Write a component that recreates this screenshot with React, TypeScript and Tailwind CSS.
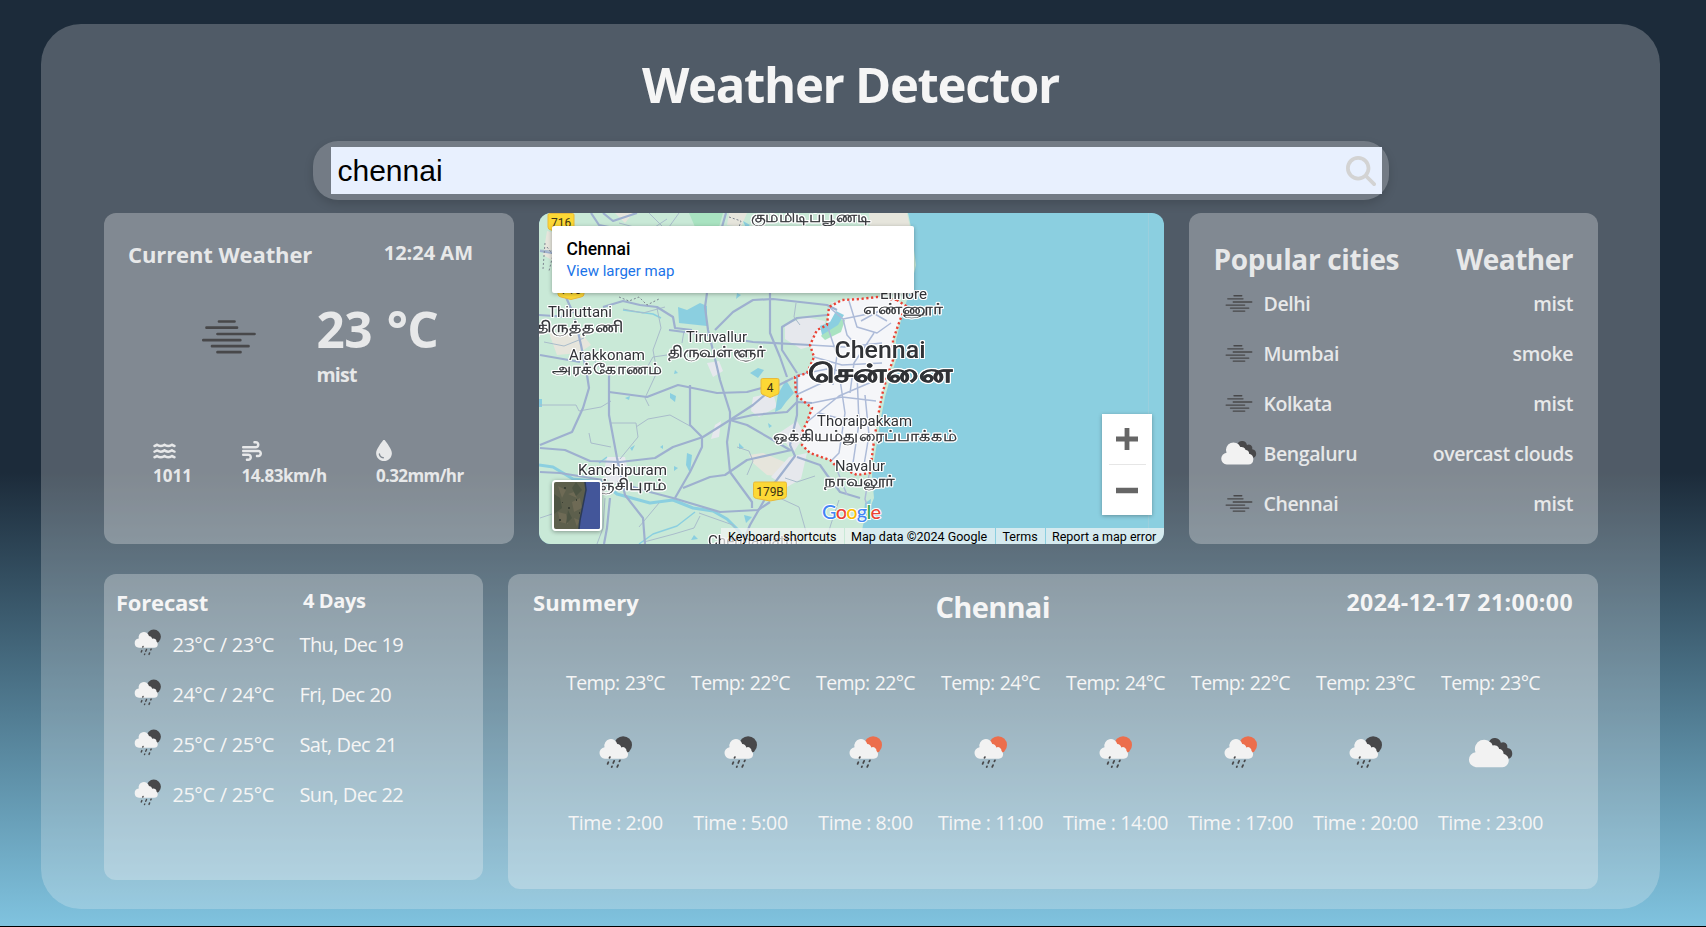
import type { ReactNode } from "react";
import { FaDroplet, FaMagnifyingGlass, FaWater, FaWind } from "react-icons/fa6";

type IconKind = "mist" | "clouds" | "rainNight" | "rainDay";

function WeatherIcon({ kind, className }: { kind: IconKind; className: string }) {
  return (
    <svg viewBox="0 0 100 100" className={className} aria-hidden="true">
      {kind === "mist" && (
        <g stroke="#48484a" strokeWidth="2.7" strokeLinecap="round">
          <path d="M40 33.5h15.500M27.500 39.700h30.500M38.500 46h37M24.300 52.200h37M33 58.200h36.500M38.500 64.200h23" />
        </g>
      )}
      {kind === "clouds" && (
        <g transform="translate(-3 -2.500) scale(1.060)">
          <path
            d="M47 31a9.500 9.500 0 0 1 18 1.500a7 7 0 0 1 10 8a8.500 8.500 0 0 1 1.500 16.500H68L47 40z"
            fill="#48484a"
          />
          <path
            d="M27 69.500a11.300 11.300 0 0 1-.500-22.500a14 14 0 0 1 26-10.500a8 8 0 0 1 10 5.500a6.500 6.500 0 0 1 6.500 7a10.400 10.400 0 0 1-1.500 20.500z"
            fill="#f2f2f2"
          />
        </g>
      )}
      {(kind === "rainNight" || kind === "rainDay") && (
        <g transform="translate(-1 0)">
          <circle cx="62.500" cy="35.500" r="14.300" fill={kind === "rainDay" ? "#ec6e4c" : "#48484a"} />
          <path
            d="M33 57.500a9.300 9.300 0 0 1-.500-18.500a10.300 10.300 0 0 1 20.500-5a7 7 0 0 1 6.500 5.500a5.800 5.800 0 0 1 8.500 5.500a6.400 6.400 0 0 1 2.500 6a7 7 0 0 1-7 6.500z"
            fill="#f2f2f2"
          />
          <g stroke="#48484a" strokeWidth="2.800" strokeLinecap="round">
            <path d="M40.500 56.200l.600-1.200M37.500 66l1.200-2.800M46.500 64.500l1.500-3.500M56.500 61.800l.800-1.600M44 71l.500-1M53 70.800l1.300-3" />
          </g>
        </g>
      )}
    </svg>
  );
}

const MINOR_ROADS =
  "M1 192h36l3 6 22-4 10-6M72 210h25l2 14-18 22M50 220l2 10 20 4M97 214l12-8 22-4 20 11M1 37l12 1 8 12 10 10M80 10l30 8 18-12M110 0l14 14M140 0l-10 14M118 95l4 20-8 22 4 22-12 26 4 8M84 96l20 4 22-6M257 90l-2 14 6 8M5 129l20 4 20-8M106 158l8-14 14-2M208 262l6-14-4-10-12-4M234 282l26 12 8 28-6 9M161 303l-6 12-20 6-30 8M120 290l-20 24M160 300l34 12 14 19M300 287l-8 24-6 20M50 140l10 14 10 8M145 118l-2 12M246 265l12 4 18-6M1 305l12-4 10 10M66 285l-2 30-6 16";

const ROADS = [
  "M1 38l12 2M64 0l10 8 24-8M52 0l8 12 20 4M187 0l-4 14",
  "M0 102l30 2M64 94l20-6 17 4 17 2 16 10 2 11 17 2M130 117l46 6 38 6 57 3",
  "M176 117l18-18 20-12 20-1 54 6 10 5",
  "M168 80l-2 14 3 23 9 37 3 13 10 32v10l-3 20 3 30 22 30v6",
  "M231 80v40l10 24 7 20M288 102l-30 3-15 9v23l15 23",
  "M1 232l32-13 11-24 6-20-2-13-6-30-6-26M1 142l40 7M26 82l8 18",
  "M70 155v47l8 43 8 37 18 23 2 26M71 285l-3 30-3 16",
  "M1 235l25 2 25 11 30 1 35-4 18-11 30-10 27-17 23-15 20-17 20-10",
  "M70 179l38 5 31-12 39 8 30-1 26-7",
  "M151 172v40l12 12v10l-12 25-15 26M144 275l27-11 15-2 22-15 40-9 5-1",
  "M191 207l17 5 26 15 17 10M191 207l23-5 34-3 10-10 15 1",
  "M258 162v40l-7 30 5 11-22 29-23 40-8 19",
  "M78 269l33 10 23 6 47 14 38-2 12-8",
  "M258 244l23 8 7 10 13 17 20 6M1 259l20 1 43 7",
];

const CITY_ROADS =
  "M290 94l14 12 4 16 18 20M304 106l30-6 14 8M271 132l34 2 38-4M275 144l28 8 40-2M288 112l10 30-4 30M258 162l30-6 56 8M268 209l32-26 42-18M273 190l30-6 34 4M257 182l30-14M280 200l30 8 26 2M300 160l6 40-6 40-8 8M318 160l2 50-6 40M335 120l-20 30-4 30M326 182l4 40-6 36M296 252l12 30M330 262l-4 24 4 12M310 88l8 26 20 6 14-10M340 98l-18 10";

const BOUNDARY =
  "M358 87L338 84 321 86 303 87 290 94 288 112 278 117 271 132 275 144 268 160 256 164 257 182 273 195 268 209 263 219 263 232 271 240 291 247 296 252 318 262 331 260 334 235 338 209 343 182 348 164 354 147 354 127 361 107 367 93z";

function MapLabel({
  x,
  y,
  w,
  size,
  weight = 400,
  stroke = 0,
  children,
}: {
  x: number;
  y: number;
  w: number;
  size: number;
  weight?: number;
  stroke?: number;
  children: string;
}) {
  return (
    <text
      x={x}
      y={y}
      textLength={w}
      lengthAdjust="spacingAndGlyphs"
      fontSize={size}
      fontWeight={weight}
      fill="#303236"
      stroke="#303236"
      strokeWidth={stroke}
      className="font-[Roboto,sans-serif] [filter:drop-shadow(1px_0_0_#fff)_drop-shadow(-1px_0_0_#fff)_drop-shadow(0_1px_0_#fff)_drop-shadow(0_-1px_0_#fff)]"
    >
      {children}
    </text>
  );
}

function Shield({ x, y, w, label }: { x: number; y: number; w: number; label: string }) {
  const h = w / 2;
  return (
    <g transform={`translate(${x} ${y})`}>
      <path
        d={`M${-h + 1.5} -9.500H${h - 1.5}Q${h} -9.500 ${h} -8V4Q${h} 6.500 ${h - 3} 7L0 9.500L${-h + 3} 7Q${-h} 6.500 ${-h} 4V-8Q${-h} -9.500 ${-h + 1.5} -9.500z`}
        fill="#fcd835"
        stroke="#e9b93a"
        strokeWidth="1"
      />
      <text y="4" textAnchor="middle" fontSize="12" fill="#3c3414" className="font-[Roboto,sans-serif]">
        {label}
      </text>
    </g>
  );
}

function MapDrawing() {
  return (
    <svg viewBox="0 0 625 331" className="block h-[331px] w-[625px]" aria-hidden="true">
      <rect width="625" height="331" fill="#8bcfe0" />
      <path
        d="M0 0H369L372 14 377 52 371 77 364 100 357 127 357 147 351 166 346 184 341 210 337 236 333 262 335 285 324 312 321 331H0z"
        fill="#c9e9d7"
      />
      <g fill="#e6e5dc">
        <path d="M8 18l16 4 4 16-10 12-14-8zM10 120l34 2 8 10-12 8-22 2zM330 0h38l3 14h-40zM190 0h18l-6 14-14-2zM210 242l14-2 24 10-4 14-16-2-14-12zM76 0h18l-8 10z" />
      </g>
      <path d="M150 0h34l-4 14h-24z" fill="#a9e3c1" />
      <g fill="#e6e8ed">
        <path d="M246 112l20-8 20 4-2 22-22 6-16-10zM214 184l20-4 4 14-18 10-8-6zM232 264l18-20 18-4-6 26-14 8zM68 244l18 0 4 18-16 10-10-10zM240 220l18-12 8 14-12 18zM168 150l12-2 4 10-10 6zM290 90l30-6 6 10zM176 212l6-4-2 16-8 2z" />
      </g>
      <path d={BOUNDARY} fill="#f5f6f9" />
      <path d="M296 105l10 2-4 12-16 8-4-4z" fill="#a9e3c1" />
      <g fill="#8bcfe0">
        <path d="M139 94l9 3 13-7 7 3v20l-28-3zM297 98l8 4-6 10-16 10-2-9 10-4zM236 199l3-18 8-14 8 13-8 9-5 7zM148 240l5 2-2 18-4-8zM131 180l6 3-1 6-5-4zM211 160l8-5 6 2-6 8zM198 80l4 2-5 4zM86 185l5-2-1 4zM96 232l-3 6-2-3zM200 230l5 5-5 1zM205 302l8 2-6 6zM136 157l3 3-4 1zM135 253l4 2-4 3zM155 322l4 4-7 1zM204 8l7 4-4 3zM229 210l4 3-3 2zM121 234l3-2 0 4zM0 186l3 0v8H0zM326 290l6-4-2 18-6 4z" />
      </g>
      <g fill="none" stroke="#8bcfe0" strokeLinejoin="round">
        <path d="M0 252l14 2 20 12 30 3 14 12 33 9 23-3 20 8 20 3 14 8 12 12 8 12" strokeWidth="3" />
        <path d="M100 331l14-10 24-8 18-14M60 250l8-6M84 97l30 4 8 4" strokeWidth="1.500" />
      </g>
      <path d={MINOR_ROADS} fill="none" stroke="#a9bccb" strokeWidth="1" />
      <g fill="none" stroke="#9eb0cf" strokeWidth="2.200" strokeLinejoin="round">
        {ROADS.map((d) => (
          <path key={d} d={d} />
        ))}
      </g>
      <path d={CITY_ROADS} fill="none" stroke="#adbbd8" strokeWidth="1.500" strokeLinejoin="round" />
      <path
        d="M6 30l-2 26M8 34l6 8-4 16M80 84l10 4 10-4 8 8 12-6M190 4l12 4-2 6"
        fill="none"
        stroke="#7d8590"
        strokeWidth="1"
        strokeDasharray="2 2"
      />
      <path d={BOUNDARY} fill="none" stroke="#ea4335" strokeWidth="2.400" strokeDasharray="2.200 2.600" />
      <rect x="609" width="1" height="331" fill="#a3cfdb" opacity=".7" />

      <Shield x={22} y={10} w={26} label="716" />
      <Shield x={32} y={77} w={26} label="716" />
      <Shield x={231} y={175} w={18} label="4" />
      <Shield x={231} y={278.5} w={33} label="179B" />

      <MapLabel x={212} y={9} w={119} size={15} stroke={0.3}>கும்மிடிப்பூண்டி</MapLabel>
      <MapLabel x={9} y={104} w={64} size={14.5}>Thiruttani</MapLabel>
      <MapLabel x={-3} y={119} w={87} size={15} stroke={0.3}>திருத்தணி</MapLabel>
      <MapLabel x={147} y={129} w={61} size={14.5}>Tiruvallur</MapLabel>
      <MapLabel x={129} y={144} w={98} size={15} stroke={0.3}>திருவள்ளூர்</MapLabel>
      <MapLabel x={30} y={147} w={76} size={14.5}>Arakkonam</MapLabel>
      <MapLabel x={13} y={161} w={110} size={15} stroke={0.3}>அரக்கோணம்</MapLabel>
      <MapLabel x={341} y={86} w={47} size={14.5}>Ennore</MapLabel>
      <MapLabel x={324} y={101} w={80} size={15} stroke={0.3}>எண்ணூர்</MapLabel>
      <MapLabel x={295.5} y={145} w={91} size={24.5} weight={500}>Chennai</MapLabel>
      <MapLabel x={269} y={169} w={144} size={25} weight={700} stroke={0.4}>சென்னை</MapLabel>
      <MapLabel x={278} y={213} w={95} size={14.5}>Thoraipakkam</MapLabel>
      <MapLabel x={234} y={228} w={184} size={15} stroke={0.3}>ஒக்கியம்துரைப்பாக்கம்</MapLabel>
      <MapLabel x={296} y={258} w={50} size={14.5}>Navalur</MapLabel>
      <MapLabel x={285} y={273} w={71} size={15} stroke={0.3}>நாவலூர்</MapLabel>
      <MapLabel x={39} y={262} w={89} size={14.5}>Kanchipuram</MapLabel>
      <MapLabel x={34} y={277} w={94} size={15} stroke={0.3}>காஞ்சிபுரம்</MapLabel>
      <MapLabel x={169} y={333} w={90} size={14.5}>Chengalpattu</MapLabel>

      <text
        x="283"
        y="306"
        textLength="59"
        fontSize="20"
        fontWeight="500"
        stroke="#ffffff"
        strokeWidth="2"
        paintOrder="stroke"
        className="font-[Lato,sans-serif]"
      >
        <tspan fill="#4285f4">G</tspan>
        <tspan fill="#ea4335">o</tspan>
        <tspan fill="#fbbc05">o</tspan>
        <tspan fill="#4285f4">g</tspan>
        <tspan fill="#34a853">l</tspan>
        <tspan fill="#ea4335">e</tspan>
      </text>
    </svg>
  );
}

function SatelliteThumb() {
  return (
    <svg viewBox="0 0 46 47" className="block h-full w-full" preserveAspectRatio="none" aria-hidden="true">
      <rect width="46" height="47" fill="#5d5f4c" />
      <path d="M4 4l8 4-4 8zM18 20l8-4 2 10-8 4zM4 30l8 2 2 10-8-2zM20 36l5 2-2 7zM14 12l6-2 3 6z" fill="#6e6a55" />
      <path d="M0 12l6 4 2 10-8 6zM14 28l4 8-6 6zM22 0l6 8-6 6-4-8z" fill="#4d5443" />
      <path d="M10 5h2v2h-2zM22 17h1v2h-1zM14 25h2v2h-2zM5 37h2v2H5zM25 30h1v2h-1zM8 20h1v1H8z" fill="#3a3f34" />
      <path d="M31 0L32 8 30 18 28 28 26 38 25 47H46V0z" fill="#43569a" />
      <path d="M31 0L32 8 30 18 28 28 26 38 25 47" fill="none" stroke="#2c3a55" strokeWidth="1.500" />
    </svg>
  );
}

function MapPanel() {
  return (
    <div className="relative h-[331px] w-[625px] overflow-hidden rounded-[12px]">
      <MapDrawing />
      <div className="absolute left-[13px] top-[13px] h-[67px] w-[362px] rounded-[2px] bg-white px-[14.5px] pt-[12px] font-[Roboto,sans-serif] shadow-[0_1px_4px_rgba(0,0,0,0.3)]">
        <div className="text-[17.5px] font-medium leading-[23px] text-black">Chennai</div>
        <div className="text-[15px] leading-[20px] text-[#1a73e8]">View larger map</div>
      </div>
      <div className="absolute left-[13px] top-[267px] h-[51px] w-[50px] overflow-hidden rounded-[4px] border-2 border-white shadow-[0_1px_4px_rgba(0,0,0,0.35)]">
        <SatelliteThumb />
      </div>
      <div className="absolute left-[563px] top-[201px] flex h-[101px] w-[50px] flex-col items-center bg-white shadow-[0_1px_4px_rgba(0,0,0,0.3)]">
        <svg viewBox="0 0 50 50" className="h-[50px] w-[50px]" aria-hidden="true">
          <path d="M14 25h22M25 14v22" stroke="#666" strokeWidth="4.800" />
        </svg>
        <div className="h-px w-[37px] bg-[#e6e6e6]" />
        <svg viewBox="0 0 50 50" className="h-[50px] w-[50px]" aria-hidden="true">
          <path d="M14 25.500h22" stroke="#666" strokeWidth="5.500" />
        </svg>
      </div>
      <div className="absolute bottom-0 right-0 flex h-[16px] gap-px whitespace-nowrap font-[Roboto,sans-serif] text-[12.5px] leading-[17px] text-black">
        <span className="w-[123px] bg-[#f5f5f5]/70 pl-[7px]">Keyboard shortcuts</span>
        <span className="w-[150px] bg-[#f5f5f5]/70 pl-[6px]">Map data ©2024 Google</span>
        <span className="w-[49px] bg-[#f5f5f5]/70 pl-[6.5px]">Terms</span>
        <span className="w-[118px] bg-[#f5f5f5]/70 pl-[6px]">Report a map error</span>
      </div>
    </div>
  );
}

function Stat({ icon, value, className }: { icon: ReactNode; value: string; className: string }) {
  return (
    <div className={className}>
      <div className="flex h-[22px] items-center">{icon}</div>
      <div className="text-[17px] font-bold leading-[27px]">{value}</div>
    </div>
  );
}

function CurrentWeather() {
  return (
    <section className="h-[331px] w-[410px] rounded-[12px] bg-[#f5f5f5]/30 pl-[24px] pt-[26px] text-[#e7e8e9]">
      <header className="flex items-start justify-between pr-[41px]">
        <h2 className="text-[22px] font-bold leading-[30px] tracking-[-0.1px]">Current Weather</h2>
        <span className="text-[20px] font-bold leading-[28px]">12:24 AM</span>
      </header>
      <div className="flex pl-[51px] pt-[19px]">
        <WeatherIcon kind="mist" className="h-[100px] w-[100px]" />
        <div className="pl-[37.5px] pt-[11px]">
          <div className="text-[49.5px] font-bold leading-[60px] tracking-[-0.6px] [word-spacing:2.5px]">23 °C</div>
          <div className="mt-px text-[19.5px] font-bold leading-[30px] tracking-[-0.8px]">mist</div>
        </div>
      </div>
      <div className="flex pl-[25px] pt-[49.5px]">
        <Stat className="w-[88.5px]" icon={<FaWater className="h-[20px] w-[23px]" />} value="1011" />
        <Stat
          className="w-[134.5px] tracking-[-0.45px]"
          icon={<FaWind className="h-[20px] w-[20px]" />}
          value="14.83km/h"
        />
        <Stat
          className="tracking-[-0.65px]"
          icon={<FaDroplet className="h-[21px] w-[16px]" />}
          value="0.32mm/hr"
        />
      </div>
    </section>
  );
}

const cities: { name: string; weather: string; icon: IconKind }[] = [
  { name: "Delhi", weather: "mist", icon: "mist" },
  { name: "Mumbai", weather: "smoke", icon: "mist" },
  { name: "Kolkata", weather: "mist", icon: "mist" },
  { name: "Bengaluru", weather: "overcast clouds", icon: "clouds" },
  { name: "Chennai", weather: "mist", icon: "mist" },
];

function PopularCities() {
  return (
    <section className="h-[331px] w-[409px] rounded-[12px] bg-[#f5f5f5]/30 pl-[24.5px] pr-[25px] pt-[28px] text-[#e7e8e9]">
      <header className="flex justify-between text-[28px] font-bold leading-[36px]">
        <h2 className="tracking-[-0.35px]">Popular cities</h2>
        <h2 className="tracking-[-0.5px]">Weather</h2>
      </header>
      <ul className="pt-[2px] text-[19.5px] font-semibold tracking-[-0.4px]">
        {cities.map((c) => (
          <li key={c.name} className="flex h-[50px] items-center">
            <WeatherIcon kind={c.icon} className="h-[50px] w-[50px]" />
            <span className="grow leading-[30px]">{c.name}</span>
            <span className="leading-[30px]">{c.weather}</span>
          </li>
        ))}
      </ul>
    </section>
  );
}

const forecast = [
  { temp: "23°C / 23°C", day: "Thu, Dec 19" },
  { temp: "24°C / 24°C", day: "Fri, Dec 20" },
  { temp: "25°C / 25°C", day: "Sat, Dec 21" },
  { temp: "25°C / 25°C", day: "Sun, Dec 22" },
];

function Forecast() {
  return (
    <section className="h-[306px] w-[379px] rounded-[12px] bg-[#f5f5f5]/30 pl-[12px] pt-[13px] text-[#f5f5f5]">
      <header className="flex h-[32px] items-start">
        <h2 className="w-[187px] text-[22px] font-bold leading-[30px] tracking-[-0.2px]">Forecast</h2>
        <span className="text-[20px] font-bold leading-[28px] tracking-[-0.4px]">4 Days</span>
      </header>
      <ul className="pl-[6.5px] text-[20px]">
        {forecast.map((f) => (
          <li key={f.day} className="flex h-[50px] items-center">
            <WeatherIcon kind="rainNight" className="h-[50px] w-[50px]" />
            <span className="w-[127px] pt-px leading-[30px] tracking-[-0.5px] [word-spacing:0.5px]">{f.temp}</span>
            <span className="pt-px leading-[30px] tracking-[-0.6px] [word-spacing:0.5px]">{f.day}</span>
          </li>
        ))}
      </ul>
    </section>
  );
}

const hours: { temp: string; time: string; icon: IconKind }[] = [
  { temp: "23°C", time: "2:00", icon: "rainNight" },
  { temp: "22°C", time: "5:00", icon: "rainNight" },
  { temp: "22°C", time: "8:00", icon: "rainDay" },
  { temp: "24°C", time: "11:00", icon: "rainDay" },
  { temp: "24°C", time: "14:00", icon: "rainDay" },
  { temp: "22°C", time: "17:00", icon: "rainDay" },
  { temp: "23°C", time: "20:00", icon: "rainNight" },
  { temp: "23°C", time: "23:00", icon: "clouds" },
];

function Summary() {
  return (
    <section className="h-[315px] w-[1090px] rounded-[12px] bg-[#f5f5f5]/30 pt-[13px] text-[#f5f5f5]">
      <header className="flex h-[40px] items-start justify-between px-[25px]">
        <h2 className="text-[22px] font-bold leading-[31px] tracking-[0.1px]">Summery</h2>
        <h2 className="text-[29px] font-bold leading-[40px] tracking-[-0.7px]">Chennai</h2>
        <span className="text-[23px] font-bold leading-[31px] tracking-[0.45px]">2024-12-17 21:00:00</span>
      </header>
      <ul className="flex justify-center pt-[41px] text-[19.5px]">
        {hours.map((h) => (
          <li key={h.time} className="flex w-[125px] flex-col items-center">
            <span className="leading-[30px] tracking-[-0.7px] [word-spacing:1px]">Temp: {h.temp}</span>
            <WeatherIcon kind={h.icon} className="mb-[23px] mt-[25px] h-[62px] w-[62px]" />
            <span className="leading-[30px] tracking-[-0.38px]">Time : {h.time}</span>
          </li>
        ))}
      </ul>
    </section>
  );
}

export default function App() {
  return (
    <div className="h-[927px] w-full overflow-hidden border-b border-black bg-[linear-gradient(180deg,#1c2b3a_0%,#1c2b3a_51%,#80c3df_100%)] pl-[41px] pt-[24px] font-['Open_Sans',sans-serif]">
      <main className="flex h-[885px] w-[1619px] flex-col rounded-[40px] bg-[#f5f5f5]/24 pt-[30px]">
        <h1 className="text-center text-[49px] font-bold leading-[60px] tracking-[-1.3px] text-[#f5f5f5]">
          Weather Detector
        </h1>
        <div className="mx-auto mt-[27px] flex h-[59px] w-[1076px] items-center rounded-[25px] bg-white/20 pl-[18px] pr-[7px] shadow-[0_4px_10px_rgba(0,0,0,0.15)]">
          <div className="flex h-[47px] grow items-center justify-between bg-[#e8f0fe] pl-[7px] pr-[6px]">
            <span className="font-['Liberation_Sans',sans-serif] text-[30px] leading-[47px] text-black">chennai</span>
            <FaMagnifyingGlass className="h-[30px] w-[30px] text-[#d3d3d3]" />
          </div>
        </div>
        <div className="mt-[13px] flex gap-[25px] pl-[63px]">
          <CurrentWeather />
          <MapPanel />
          <PopularCities />
        </div>
        <div className="mt-[30px] flex items-start gap-[25px] pl-[63px]">
          <Forecast />
          <Summary />
        </div>
      </main>
    </div>
  );
}
